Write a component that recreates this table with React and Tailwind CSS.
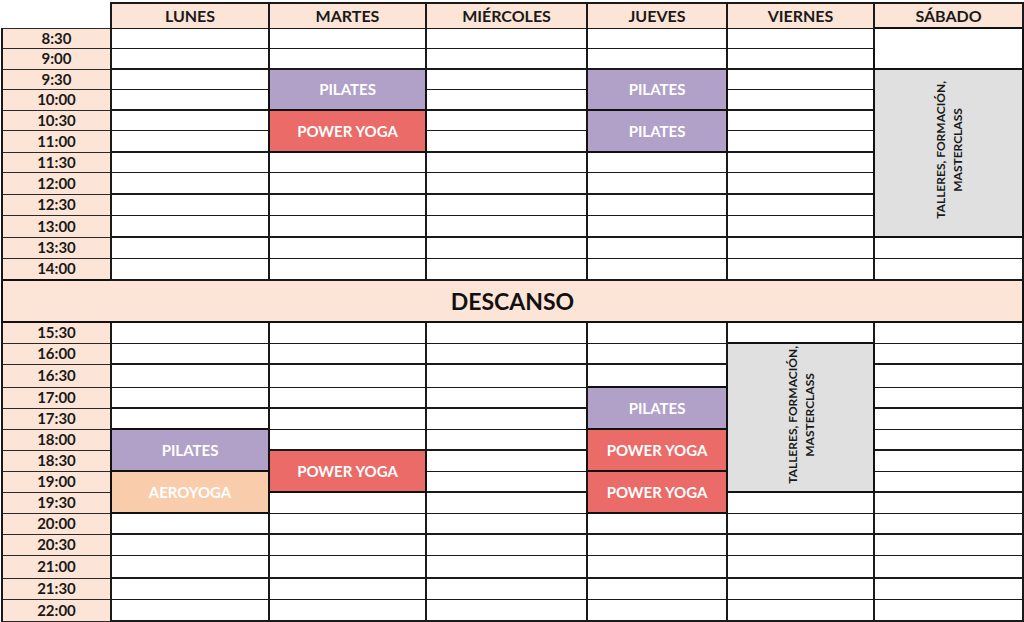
const days = ["LUNES", "MARTES", "MIÉRCOLES", "JUEVES", "VIERNES", "SÁBADO"];

const topRows = [
    ["8:30", 20], ["9:00", 21], ["9:30", 20], ["10:00", 21], ["10:30", 20], ["11:00", 22],
    ["11:30", 20], ["12:00", 22], ["12:30", 21], ["13:00", 22], ["13:30", 21], ["14:00", 22],
];

const bottomRows = [
    ["15:30", 21], ["16:00", 21], ["16:30", 23], ["17:00", 21], ["17:30", 21], ["18:00", 21], ["18:30", 21],
    ["19:00", 21], ["19:30", 21], ["20:00", 21], ["20:30", 21], ["21:00", 23], ["21:30", 21], ["22:00", 22],
];

const heights = { 20: "h-[20px]", 21: "h-[21px]", 22: "h-[22px]", 23: "h-[23px]" };

const colors = {
    pilates: "bg-[#b1a0c7]",
    power: "bg-[#ea6b67]",
    aero: "bg-[#f9cdab]",
    gray: "bg-[#e0e0e0]",
    blank: "bg-white",
};

// day index, start row, span, type, label
const topEvents = [
    [1, 2, 2, "pilates", "PILATES"],
    [1, 4, 2, "power", "POWER YOGA"],
    [3, 2, 2, "pilates", "PILATES"],
    [3, 4, 2, "pilates", "PILATES"],
    [5, 0, 2, "blank", ""],
    [5, 2, 8, "gray", "TALLERES"],
];

const bottomEvents = [
    [0, 5, 2, "pilates", "PILATES"],
    [0, 7, 2, "aero", "AEROYOGA"],
    [1, 6, 2, "power", "POWER YOGA"],
    [3, 3, 2, "pilates", "PILATES"],
    [3, 5, 2, "power", "POWER YOGA"],
    [3, 7, 2, "power", "POWER YOGA"],
    [4, 1, 7, "gray", "TALLERES"],
];

function VerticalLabel() {
    return (
        <div className="inline-block [writing-mode:vertical-rl] rotate-180 text-center text-[12px] leading-[17px] font-bold text-[#1a1a1a]">
            TALLERES, FORMACIÓN,
            <br />
            MASTERCLASS
        </div>
    );
}

function Rows({ rows, events }) {
    return rows.map(([time, h], r) => {
        const hourEnd = time.endsWith(":00");
        return (
            <tr key={time} className={heights[h]}>
                <td className="border border-[#2a2a2a] border-l-2 border-l-[#1a1a1a] bg-[#fce4d6] text-center text-[15px] font-bold text-[#1a1a1a] leading-none p-0">
                    {time}
                </td>
                {days.map((d, c) => {
                    const ev = events.find(e => e[0] === c && e[1] === r);
                    const covered = events.find(e => e[0] === c && r > e[1] && r < e[1] + e[2]);
                    if (covered) return null;
                    if (ev) {
                        const [, , span, type, label] = ev;
                        return (
                            <td
                                key={d}
                                rowSpan={span}
                                className={`border-2 border-[#111] ${colors[type]} text-center align-middle p-0 ${
                                    type === "gray" ? "" : "text-white text-[15px] font-bold leading-none"
                                }`}
                            >
                                {type === "gray" ? <VerticalLabel /> : label}
                            </td>
                        );
                    }
                    return (
                        <td
                            key={d}
                            className={`border border-x-2 border-[#1a1a1a] bg-white p-0 ${hourEnd ? "border-b-2" : ""}`}
                        />
                    );
                })}
            </tr>
        );
    });
}

export default function App() {
    return (
        <div className="w-[1024px] h-[622px] bg-white pl-px pt-[2px] font-['Lato','Open_Sans',sans-serif] overflow-hidden">
            <table className="table-fixed border-collapse w-[1021px]">
                <colgroup>
                    <col className="w-[109px]" />
                    <col className="w-[158px]" />
                    <col className="w-[157px]" />
                    <col className="w-[161px]" />
                    <col className="w-[140px]" />
                    <col className="w-[147px]" />
                    <col className="w-[149px]" />
                </colgroup>
                <tbody>
                    <tr className="h-[25px]">
                        <td className="p-0" />
                        {days.map(d => (
                            <td
                                key={d}
                                className="border-2 border-[#1a1a1a] border-b bg-[#fce4d6] text-center text-[16px] font-bold text-[#1a1a1a] leading-none p-0"
                            >
                                {d}
                            </td>
                        ))}
                    </tr>
                    <Rows rows={topRows} events={topEvents} />
                    <tr className="h-[42px]">
                        <td
                            colSpan={7}
                            className="border-2 border-[#111] bg-[#fce4d6] text-center text-[23px] font-bold text-[#111] p-0"
                        >
                            DESCANSO
                        </td>
                    </tr>
                    <Rows rows={bottomRows} events={bottomEvents} />
                </tbody>
            </table>
        </div>
    );
}
